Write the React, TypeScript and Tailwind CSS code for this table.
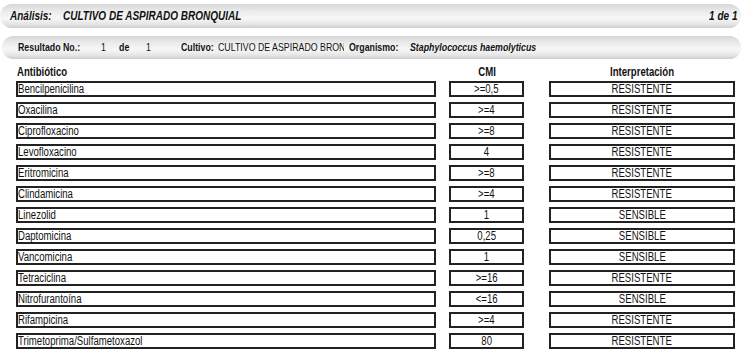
import type { ReactNode } from "react";

const rows: [string, string, string][] = [
  ["Bencilpenicilina", ">=0,5", "RESISTENTE"],
  ["Oxacilina", ">=4", "RESISTENTE"],
  ["Ciprofloxacino", ">=8", "RESISTENTE"],
  ["Levofloxacino", "4", "RESISTENTE"],
  ["Eritromicina", ">=8", "RESISTENTE"],
  ["Clindamicina", ">=4", "RESISTENTE"],
  ["Linezolid", "1", "SENSIBLE"],
  ["Daptomicina", "0,25", "SENSIBLE"],
  ["Vancomicina", "1", "SENSIBLE"],
  ["Tetraciclina", ">=16", "RESISTENTE"],
  ["Nitrofurantoína", "<=16", "SENSIBLE"],
  ["Rifampicina", ">=4", "RESISTENTE"],
  ["Trimetoprima/Sulfametoxazol", "80", "RESISTENTE"],
];

const pill =
  "rounded-full bg-[linear-gradient(to_bottom,#d6d6d6_0%,#ebebeb_30%,#f7f7f7_60%,#e4e4e4_85%,#cccccc_100%)]";

const cell = "h-[16px] border-2 border-[#222] flex items-center text-[12px] leading-none text-[#111]";

// the report uses a condensed face; squeeze Liberation Sans horizontally
function Narrow({ children, origin = "origin-left" }: { children: ReactNode; origin?: string }) {
  return <span className={`inline-block whitespace-nowrap scale-x-[0.8] ${origin}`}>{children}</span>;
}

export default function App() {
  return (
    <div className="w-[749px] h-[360px] bg-white overflow-hidden font-['Liberation_Sans',Arial,sans-serif] text-[#111]">
      <div className={`${pill} mt-[4px] w-[741px] h-[24px] flex items-center pl-[10px] pr-[4px] text-[12.5px] font-bold italic`}>
        <span className="w-[53px] shrink-0"><Narrow>Análisis:</Narrow></span>
        <span className="shrink-0"><Narrow>CULTIVO DE ASPIRADO BRONQUIAL</Narrow></span>
        <span className="ml-auto"><Narrow origin="origin-right">1 de 1</Narrow></span>
      </div>

      <div className={`${pill} mt-[8px] ml-[2px] w-[739px] h-[23px] flex items-center pl-[16px] text-[11px]`}>
        <span className="font-bold w-[83px] shrink-0"><Narrow>Resultado No.:</Narrow></span>
        <span className="w-[18px] shrink-0"><Narrow>1</Narrow></span>
        <span className="font-bold w-[27px] shrink-0"><Narrow>de</Narrow></span>
        <span className="w-[35px] shrink-0"><Narrow>1</Narrow></span>
        <span className="font-bold w-[37px] shrink-0"><Narrow>Cultivo:</Narrow></span>
        <span className="w-[126px] mr-[5px] shrink-0 overflow-hidden"><Narrow>CULTIVO DE ASPIRADO BRONQUIAL</Narrow></span>
        <span className="font-bold w-[61px] shrink-0"><Narrow>Organismo:</Narrow></span>
        <span className="font-bold italic shrink-0"><Narrow>Staphylococcus haemolyticus</Narrow></span>
      </div>

      <div className="mt-[6px] flex h-[14px] items-center text-[12px] font-bold">
        <span className="ml-[17px] w-[432px] shrink-0"><Narrow>Antibiótico</Narrow></span>
        <span className="w-[75px] shrink-0 text-center"><Narrow origin="origin-center">CMI</Narrow></span>
        <span className="ml-[25px] w-[186px] shrink-0 text-center"><Narrow origin="origin-center">Interpretación</Narrow></span>
      </div>

      <div className="mt-[2px] flex flex-col gap-[5px]">
        {rows.map(([name, cmi, interp]) => (
          <div key={name} className="flex">
            <div className={`${cell} ml-[16px] w-[420px]`}><Narrow>{name}</Narrow></div>
            <div className={`${cell} ml-[13px] w-[75px] justify-center`}><Narrow origin="origin-center">{cmi}</Narrow></div>
            <div className={`${cell} ml-[25px] w-[186px] justify-center`}><Narrow origin="origin-center">{interp}</Narrow></div>
          </div>
        ))}
      </div>
    </div>
  );
}
